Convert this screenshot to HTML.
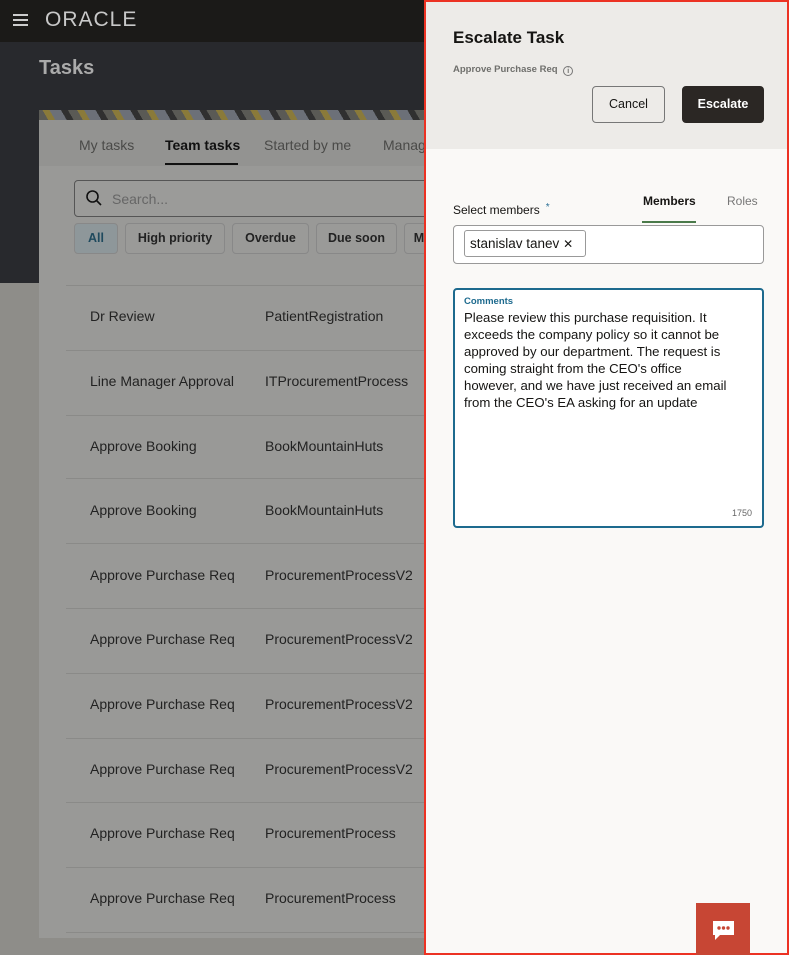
<!DOCTYPE html>
<html><head><style>
*{box-sizing:border-box;margin:0;padding:0}
body{width:789px;height:955px;overflow:hidden;position:relative;font-family:"Liberation Sans",sans-serif;background:#8e8d89}
.top{position:absolute;left:0;top:0;width:789px;height:42px;background:#1b1a18}
.dark{position:absolute;left:0;top:42px;width:789px;height:241px;background:#28292d}
.card{position:absolute;left:39px;top:110px;width:400px;height:828px;background:#999997}
.stripe{position:absolute;left:39px;top:110px;width:400px;height:10px;background:repeating-linear-gradient(60deg,#5a5a55 0 8px,#8a7a3a 8px 14px,#6c7078 14px 24px,#303030 24px 30px)}
.tabsbar{position:absolute;left:39px;top:120px;width:400px;height:46px;background:#939391}
.tab{position:absolute;top:137px;font-size:14px;color:#4a4a48}
.row{position:absolute;left:66px;width:373px;height:1px;background:#8a8a88}
.cell{position:absolute;font-size:14px;color:#222}
.chip{position:absolute;top:223px;height:31px;border:1px solid #888;border-radius:4px;font-size:12.5px;font-weight:bold;color:#222;text-align:center;line-height:29px;background:#9a9a98}
.panel{position:absolute;left:424px;top:0;width:365px;height:955px;background:#faf9f7;border:2px solid #ec3223}
.phead{position:absolute;left:0;top:0;width:361px;height:147px;background:#edebe8}
</style></head><body>
<div class="top"></div>
<div style="position:absolute;left:13px;top:14px;width:15px;height:2px;background:#ccc;box-shadow:0 5px 0 #ccc,0 10px 0 #ccc"></div>
<div style="position:absolute;left:45px;top:8px;font-size:21px;color:#c8c8c8;letter-spacing:1px">ORACLE</div>
<div class="dark"></div>
<div style="position:absolute;left:39px;top:57px;font-size:20px;font-weight:bold;color:#aaa">Tasks</div>
<div class="card"></div><div class="stripe"></div><div class="tabsbar"></div>
<div class="tab" style="left:79px">My tasks</div>
<div class="tab" style="left:165px;color:#111;font-weight:bold">Team tasks</div>
<div style="position:absolute;left:165px;top:163px;width:73px;height:2px;background:#111"></div>
<div class="tab" style="left:264px">Started by me</div>
<div class="tab" style="left:383px">Manag</div>
<div style="position:absolute;left:74px;top:180px;width:360px;height:37px;border:1px solid #555;border-radius:4px;background:#9b9b99"></div>
<svg style="position:absolute;left:85px;top:189px" width="18" height="18" viewBox="0 0 18 18"><circle cx="7.5" cy="7.5" r="5.5" fill="none" stroke="#111" stroke-width="1.6"/><path d="M11.5 11.5L16 16" stroke="#111" stroke-width="1.6"/></svg>
<div style="position:absolute;left:112px;top:191px;font-size:14px;color:#666">Search...</div>
<div class="chip" style="left:74px;width:44px;background:#8e979a;color:#1f4a5e">All</div>
<div class="chip" style="left:125px;width:100px">High priority</div>
<div class="chip" style="left:232px;width:77px">Overdue</div>
<div class="chip" style="left:316px;width:81px">Due soon</div>
<div class="chip" style="left:404px;width:30px">M</div>
<div class="row" style="top:285px"></div>
<div class="cell" style="left:90px;top:308px">Dr Review</div><div class="cell" style="left:265px;top:308px">PatientRegistration</div>
<div class="row" style="top:350px"></div>
<div class="cell" style="left:90px;top:373px">Line Manager Approval</div><div class="cell" style="left:265px;top:373px">ITProcurementProcess</div>
<div class="row" style="top:415px"></div>
<div class="cell" style="left:90px;top:438px">Approve Booking</div><div class="cell" style="left:265px;top:438px">BookMountainHuts</div>
<div class="row" style="top:478px"></div>
<div class="cell" style="left:90px;top:502px">Approve Booking</div><div class="cell" style="left:265px;top:502px">BookMountainHuts</div>
<div class="row" style="top:543px"></div>
<div class="cell" style="left:90px;top:567px">Approve Purchase Req</div><div class="cell" style="left:265px;top:567px">ProcurementProcessV2</div>
<div class="row" style="top:608px"></div>
<div class="cell" style="left:90px;top:631px">Approve Purchase Req</div><div class="cell" style="left:265px;top:631px">ProcurementProcessV2</div>
<div class="row" style="top:673px"></div>
<div class="cell" style="left:90px;top:696px">Approve Purchase Req</div><div class="cell" style="left:265px;top:696px">ProcurementProcessV2</div>
<div class="row" style="top:738px"></div>
<div class="cell" style="left:90px;top:761px">Approve Purchase Req</div><div class="cell" style="left:265px;top:761px">ProcurementProcessV2</div>
<div class="row" style="top:802px"></div>
<div class="cell" style="left:90px;top:825px">Approve Purchase Req</div><div class="cell" style="left:265px;top:825px">ProcurementProcess</div>
<div class="row" style="top:867px"></div>
<div class="cell" style="left:90px;top:890px">Approve Purchase Req</div><div class="cell" style="left:265px;top:890px">ProcurementProcess</div>
<div class="row" style="top:932px"></div>

<div class="panel">
<div class="phead"></div>
<div style="position:absolute;left:27px;top:26px;font-size:17px;font-weight:bold;color:#161513">Escalate Task</div>
<div style="position:absolute;left:27px;top:62px;font-size:9.5px;font-weight:bold;color:#6f6f6c">Approve Purchase Req <span style="display:inline-block;width:10px;height:10px;border:1px solid #777;border-radius:50%;font-size:7px;text-align:center;line-height:9px;margin-left:3px;vertical-align:-1px">i</span></div>
<div style="position:absolute;left:166px;top:84px;width:73px;height:37px;border:1px solid #777;border-radius:4px;font-size:12.5px;color:#161513;text-align:center;line-height:35px">Cancel</div>
<div style="position:absolute;left:256px;top:84px;width:82px;height:37px;background:#2b2724;border-radius:4px;font-size:12.5px;font-weight:bold;color:#fff;text-align:center;line-height:37px">Escalate</div>
<div style="position:absolute;left:27px;top:200px;font-size:12px;color:#161513">Select members <span style="color:#2a6f95;font-size:10px;vertical-align:4px">&nbsp;*</span></div>
<div style="position:absolute;left:217px;top:192px;font-size:12px;font-weight:bold;color:#161513">Members</div>
<div style="position:absolute;left:216px;top:219px;width:54px;height:2px;background:#4a7a4a"></div>
<div style="position:absolute;left:301px;top:192px;font-size:12px;color:#777">Roles</div>
<div style="position:absolute;left:27px;top:223px;width:311px;height:39px;border:1px solid #999;border-radius:4px;background:#fff"></div>
<div style="position:absolute;left:38px;top:228px;width:122px;height:27px;border:1px solid #999;border-radius:3px;font-size:13.5px;color:#161513;line-height:25px;padding-left:5px">stanislav tanev <span style="font-size:12px">✕</span></div>
<div style="position:absolute;left:27px;top:286px;width:311px;height:240px;border:2px solid #1d6a8e;border-radius:4px;background:#fff"></div>
<div style="position:absolute;left:38px;top:294px;font-size:9.5px;font-weight:bold;color:#1d6a8e">Comments</div>
<div style="position:absolute;left:38px;top:307px;white-space:nowrap;font-size:13.2px;line-height:17px;color:#161513">Please review this purchase requisition. It<br>exceeds the company policy so it cannot be<br>approved by our department. The request is<br>coming straight from the CEO's office<br>however, and we have just received an email<br>from the CEO's EA asking for an update</div>
<div style="position:absolute;left:306px;top:506px;font-size:9px;color:#666">1750</div>
<div style="position:absolute;left:270px;top:901px;width:54px;height:52px;background:#c74634"></div>
<svg style="position:absolute;left:286px;top:918px" width="24" height="22" viewBox="0 0 24 22"><path d="M1 1H22V15H8L3 20V15H1Z" fill="#fff"/><circle cx="7" cy="8" r="1.7" fill="#c74634"/><circle cx="11.5" cy="8" r="1.7" fill="#c74634"/><circle cx="16" cy="8" r="1.7" fill="#c74634"/></svg>
</div>
</body></html>
